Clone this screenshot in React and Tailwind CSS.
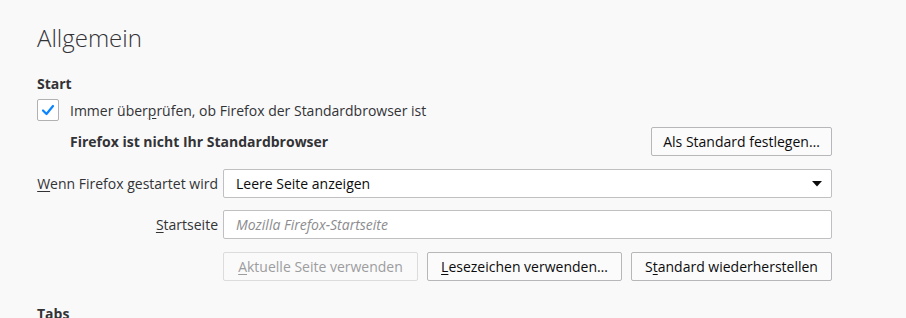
import React from "react";

function U({ children }) {
  return <span className="underline underline-offset-2">{children}</span>;
}

function Btn({ children, className = "", disabled }) {
  return (
    <button
      disabled={disabled}
      className={`h-[29px] border rounded-[2px] px-2 text-[14px] leading-none whitespace-nowrap ${
        disabled
          ? "border-[#dcdcdd] text-[#9d9d9f] bg-[#fafafa]"
          : "border-[#b7b7b9] text-[#0c0c0d] bg-[#fbfbfb]"
      } ${className}`}
    >
      {children}
    </button>
  );
}

export default function App() {
  return (
    <div
      className="w-[906px] h-[318px] overflow-hidden bg-[#f9f9fa] text-[#333336]"
      style={{ fontFamily: '"Open Sans", "Noto Sans", sans-serif' }}
    >
      <div className="pl-[37px] w-[832px]">
        <h1 className="pt-[22px] text-[24px] font-light leading-[32px] text-[#333336]">Allgemein</h1>

        <h2 className="mt-[20px] text-[14px] font-bold leading-[20px]">Start</h2>

        <label className="mt-[5px] flex items-center gap-[11px] h-[22px]">
          <span className="w-[22px] h-[22px] flex items-center justify-center bg-white border border-[#b1b1b3] rounded-[2px]">
            <svg width="14" height="12" viewBox="0 0 14 12">
              <path d="M2 6.5 L5.5 10 L12 2" fill="none" stroke="#0a84ff" strokeWidth="2.2" strokeLinecap="round" strokeLinejoin="round" />
            </svg>
          </span>
          <span className="text-[14px] text-[#333336]">
            Immer über<U>p</U>rüfen, ob Firefox der Standardbrowser ist
          </span>
        </label>

        <div className="mt-[6px] flex items-center justify-between pl-[33px]">
          <span className="text-[14px] font-bold">Firefox ist nicht Ihr Standardbrowser</span>
          <Btn className="w-[181px]">
            Als Standard festle<U>g</U>en…
          </Btn>
        </div>

        <div className="mt-[13px] grid grid-cols-[181px_1fr] gap-x-[5px] gap-y-[12px] items-center">
          <span className="text-right text-[14px] whitespace-nowrap">
            <U>W</U>enn Firefox gestartet wird
          </span>
          <div className="h-[29px] bg-white border border-[#c0c0c2] rounded-[2px] flex items-center justify-between pl-[12px] pr-[9px]">
            <span className="text-[14px] text-[#0c0c0d]">Leere Seite anzeigen</span>
            <svg width="10" height="6" viewBox="0 0 10 6">
              <path d="M0 0 H10 L5 5.5 Z" fill="#0c0c0d" />
            </svg>
          </div>

          <span className="text-right text-[14px]">
            <U>S</U>tartseite
          </span>
          <div className="h-[29px] bg-white border border-[#c0c0c2] rounded-[2px] flex items-center pl-[12px]">
            <span className="text-[14px] italic text-[#8c8c8f]">Mozilla Firefox-Startseite</span>
          </div>

          <span />
          <div className="flex gap-[9px] mt-[1px]">
            <Btn disabled className="w-[195px]">
              <U>A</U>ktuelle Seite verwenden
            </Btn>
            <Btn className="w-[195px]">
              <U>L</U>esezeichen verwenden…
            </Btn>
            <Btn className="w-[201px]">
              S<U>t</U>andard wiederherstellen
            </Btn>
          </div>
        </div>

        <h2 className="mt-[23px] text-[14px] font-bold leading-[20px]">Tabs</h2>
      </div>
    </div>
  );
}
